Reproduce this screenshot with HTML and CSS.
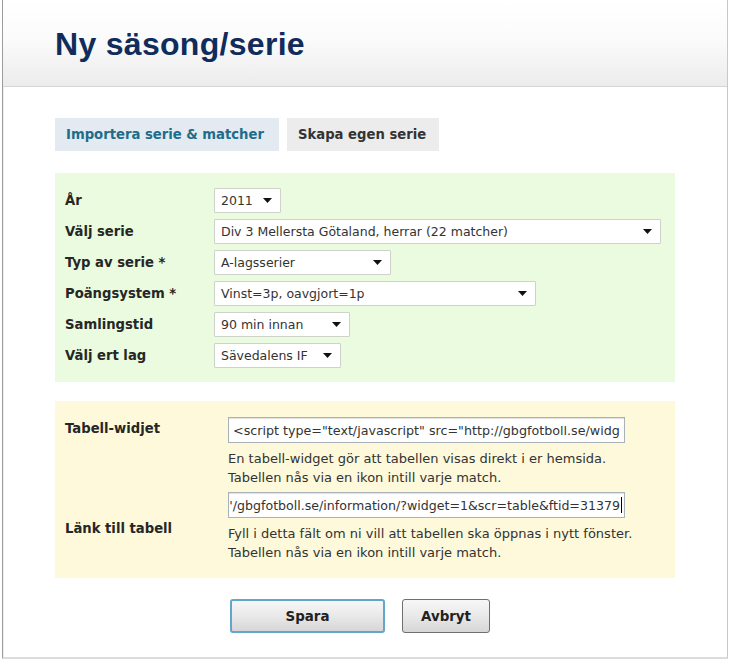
FILE: index.html
```html
<!DOCTYPE html>
<html lang="sv">
<head>
<meta charset="utf-8">
<title>Ny säsong/serie</title>
<link rel="stylesheet" href="styles.css">
</head>
<body>
<div class="frame">
  <div class="header">
    <h1 class="title">Ny säsong/serie</h1>
  </div>
  <div class="content">
    <div class="tabs">
      <div class="tab tab-active">Importera serie &amp; matcher</div>
      <div class="tab">Skapa egen serie</div>
    </div>

    <div class="panel panel-green">
      <div class="label">År</div>
      <div class="select w-year"><span>2011</span><svg class="arrow" width="9" height="5" viewBox="0 0 9 5"><path d="M0 0H9L4.5 5Z" fill="#111"/></svg></div>

      <div class="label">Välj serie</div>
      <div class="select w-serie"><span>Div 3 Mellersta Götaland, herrar (22 matcher)</span><svg class="arrow" width="9" height="5" viewBox="0 0 9 5"><path d="M0 0H9L4.5 5Z" fill="#111"/></svg></div>

      <div class="label">Typ av serie *</div>
      <div class="select w-typ"><span>A-lagsserier</span><svg class="arrow" width="9" height="5" viewBox="0 0 9 5"><path d="M0 0H9L4.5 5Z" fill="#111"/></svg></div>

      <div class="label">Poängsystem *</div>
      <div class="select w-poang"><span>Vinst=3p, oavgjort=1p</span><svg class="arrow" width="9" height="5" viewBox="0 0 9 5"><path d="M0 0H9L4.5 5Z" fill="#111"/></svg></div>

      <div class="label">Samlingstid</div>
      <div class="select w-tid"><span>90 min innan</span><svg class="arrow" width="9" height="5" viewBox="0 0 9 5"><path d="M0 0H9L4.5 5Z" fill="#111"/></svg></div>

      <div class="label">Välj ert lag</div>
      <div class="select w-lag"><span>Sävedalens IF</span><svg class="arrow" width="9" height="5" viewBox="0 0 9 5"><path d="M0 0H9L4.5 5Z" fill="#111"/></svg></div>
    </div>

    <div class="panel panel-yellow">
      <div class="label label-top">Tabell-widjet</div>
      <div class="field">
        <div class="input input-first">&lt;script type="text/javascript" src="http://gbgfotboll.se/widg</div>
        <p class="help">En tabell-widget gör att tabellen visas direkt i er hemsida.<br>Tabellen nås via en ikon intill varje match.</p>
      </div>

      <div class="label label-mid">Länk till tabell</div>
      <div class="field">
        <div class="input input-end"><span class="end-text">'/gbgfotboll.se/information/?widget=1&amp;scr=table&amp;ftid=31379</span><span class="caret"></span></div>
        <p class="help">Fyll i detta fält om ni vill att tabellen ska öppnas i nytt fönster.<br>Tabellen nås via en ikon intill varje match.</p>
      </div>
    </div>

    <div class="buttons">
      <button class="btn btn-primary" type="button">Spara</button>
      <button class="btn" type="button">Avbryt</button>
    </div>
  </div>
</div>
</body>
</html>
```
FILE: styles.css
```css
html, body {
  margin: 0;
  padding: 0;
  background: #ffffff;
}

body {
  font-family: "DejaVu Sans", Verdana, sans-serif;
  color: #2a2a2a;
}

.frame {
  margin: 0 2px 0 2px;
  height: 659px;
  box-sizing: border-box;
  border-left: 1px solid #9c9c9c;
  border-right: 1px solid #c8c8c8;
  border-bottom: 2px solid #dcdcdc;
  box-shadow: inset 1px 0 0 #eeeeee;
}

.header {
  height: 87px;
  box-sizing: border-box;
  padding: 28px 0 0 52px;
  background: linear-gradient(to bottom, #ffffff 0%, #fbfbfb 45%, #ececec 100%);
  border-bottom: 1px solid #d6d6d6;
}

.title {
  margin: 0;
  font-family: "Liberation Sans", Arial, sans-serif;
  font-weight: bold;
  font-size: 32px;
  line-height: 32px;
  letter-spacing: 0.3px;
  color: #102c5c;
}

.content {
  padding: 31px 0 0 52px;
}

.tabs {
  display: flex;
  gap: 8px;
  margin-bottom: 22px;
}

.tab {
  height: 33px;
  box-sizing: border-box;
  padding: 0 11px;
  display: flex;
  align-items: center;
  white-space: nowrap;
  font-weight: bold;
  font-size: 13.2px;
  background: #ececec;
  color: #333333;
}

.tab-active {
  width: 224px;
  background: #e3eaf1;
  color: #1e6d8a;
}

.tab:not(.tab-active) {
  min-width: 152px;
}

.panel {
  width: 620px;
  box-sizing: border-box;
  display: grid;
}

.panel-green {
  background: #eafbdf;
  padding: 15px 0 14px 10px;
  grid-template-columns: 149px 1fr;
  row-gap: 6px;
  align-items: center;
  margin-bottom: 19px;
}

.label {
  font-weight: bold;
  font-size: 13.2px;
  color: #262626;
}

.select {
  height: 25px;
  box-sizing: border-box;
  background: #ffffff;
  border: 1px solid #cdd3cb;
  border-radius: 1px;
  display: flex;
  align-items: center;
  justify-content: space-between;
  padding: 0 8px 0 6px;
  font-size: 12.5px;
  color: #333333;
}

.arrow {
  flex: none;
}

.w-year { width: 67px; }
.w-serie { width: 447px; }
.w-typ { width: 177px; }
.w-poang { width: 322px; }
.w-tid { width: 136px; }
.w-lag { width: 127px; }

.panel-yellow {
  background: #fdf9da;
  padding: 16px 0 16px 10px;
  grid-template-columns: 163px 1fr;
  row-gap: 5px;
}

.label-top {
  align-self: start;
  padding-top: 4px;
}

.label-mid {
  align-self: center;
  padding-top: 2px;
}

.field {
  display: flex;
  flex-direction: column;
}

.input {
  width: 397px;
  height: 26px;
  box-sizing: border-box;
  border: 1px solid #a9b2b8;
  box-shadow: inset 0 1px 1px #e0e0e0;
  background: #ffffff;
  padding: 0 4px;
  display: flex;
  align-items: center;
  overflow: hidden;
  white-space: nowrap;
  font-size: 12.7px;
  color: #333333;
}

.input-end {
  justify-content: flex-end;
  padding: 0 2px 0 0;
  font-size: 12.6px;
}

.end-text {
  white-space: nowrap;
}

.caret {
  flex: none;
  width: 1px;
  height: 16px;
  background: #000000;
  margin-left: 1px;
}

.help {
  margin: 6px 0 0 0;
  font-size: 13px;
  line-height: 19px;
  color: #333333;
}

.buttons {
  display: flex;
  gap: 17px;
  padding: 21px 0 0 175px;
}

.btn {
  height: 34px;
  box-sizing: border-box;
  font-family: "DejaVu Sans", Verdana, sans-serif;
  font-weight: bold;
  font-size: 13.4px;
  color: #222222;
  background: linear-gradient(to bottom, #f7f7f7 0%, #e9e9e9 50%, #d6d6d6 100%);
  border: 1px solid #6f6f6f;
  border-radius: 3px;
  width: 88px;
  padding: 0;
}

.btn-primary {
  width: 155px;
  border: 2px solid #62a6cc;
}
```
